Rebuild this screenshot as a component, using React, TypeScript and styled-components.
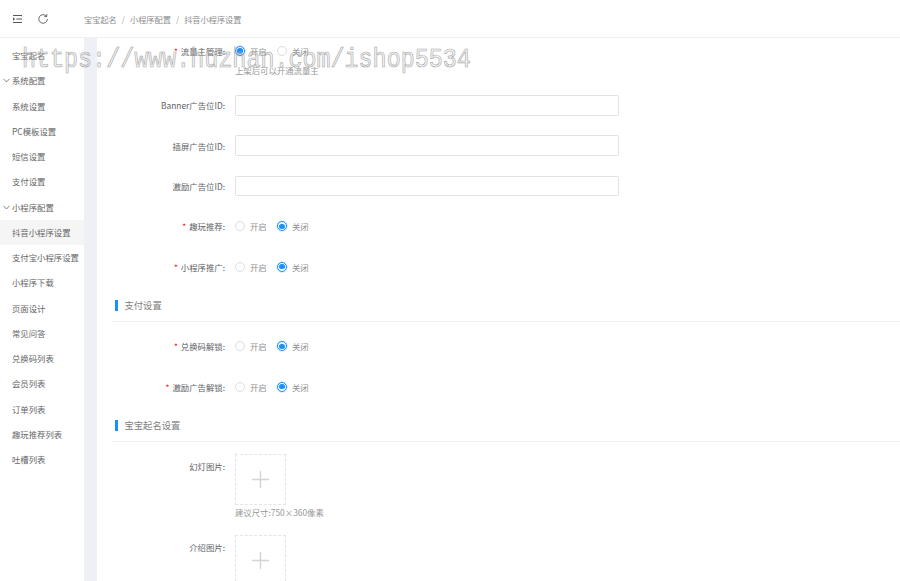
import React from "react";
import styled, { createGlobalStyle } from "styled-components";

const GlobalStyle = createGlobalStyle`
  html, body {
    margin: 0;
    padding: 0;
    height: 100%;
    overflow: hidden;
    background: #fff;
    font-family: "Noto Sans CJK SC", "Noto Sans", sans-serif;
  }
  * { box-sizing: border-box; }
`;

const menu = [
  { name: "宝宝起名", group: false },
  { name: "系统配置", group: true },
  { name: "系统设置", group: false },
  { name: "PC模板设置", group: false },
  { name: "短信设置", group: false },
  { name: "支付设置", group: false },
  { name: "小程序配置", group: true },
  { name: "抖音小程序设置", group: false, active: true },
  { name: "支付宝小程序设置", group: false },
  { name: "小程序下载", group: false },
  { name: "页面设计", group: false },
  { name: "常见问答", group: false },
  { name: "兑换码列表", group: false },
  { name: "会员列表", group: false },
  { name: "订单列表", group: false },
  { name: "趣玩推荐列表", group: false },
  { name: "吐槽列表", group: false },
];

function SwitchRow({ label, on, required = true }: { label: string; on: boolean; required?: boolean }) {
  return (
    <Row>
      <Label $required={required}>{label}</Label>
      <RadioGroup>
        <RadioItem>
          <Radio $checked={on} />
          开启
        </RadioItem>
        <RadioItem>
          <Radio $checked={!on} />
          关闭
        </RadioItem>
      </RadioGroup>
    </Row>
  );
}

function InputRow({ label }: { label: string }) {
  return (
    <Row>
      <Label>{label}</Label>
      <TextInput />
    </Row>
  );
}

function UploadRow({ label, hint }: { label: string; hint?: string }) {
  return (
    <UploadItem>
      <Label>{label}</Label>
      <div>
        <UploadBox>
          <svg width="17" height="17" viewBox="0 0 17 17">
            <path d="M8.5 0v17M0 8.5h17" stroke="#d4d4d4" strokeWidth="1.4" fill="none" />
          </svg>
        </UploadBox>
        {hint && <UploadHint>{hint}</UploadHint>}
      </div>
    </UploadItem>
  );
}

export default function App() {
  return (
    <>
      <GlobalStyle />
      <Page>
        <Header>
          <IconSlot>
            <svg width="9" height="8" viewBox="0 0 9 8">
              <path d="M0 0.5h9M3.4 4h5.6M0 7.5h9" stroke="#555" strokeWidth="1" fill="none" />
              <path d="M0 2.2L2.2 4L0 5.8z" fill="#555" />
            </svg>
          </IconSlot>
          <IconSlot>
            <svg width="10" height="10" viewBox="0 0 10 10">
              <path d="M8.4 2.2A4.3 4.3 0 1 0 9.4 5" stroke="#555" strokeWidth="0.9" fill="none" />
              <path d="M8.8 0.2v2.4H6.4" stroke="#555" strokeWidth="0.9" fill="none" />
            </svg>
          </IconSlot>
          <Breadcrumb>
            <span>宝宝起名</span>
            <Slash>/</Slash>
            <span>小程序配置</span>
            <Slash>/</Slash>
            <span>抖音小程序设置</span>
          </Breadcrumb>
        </Header>
        <Body>
          <Sidebar>
            {menu.map((item) => (
              <MenuItem key={item.name} $active={item.active}>
                {item.group && (
                  <Chevron width="7" height="5" viewBox="0 0 7 5">
                    <path d="M0.5 0.8L3.5 4L6.5 0.8" stroke="#666" strokeWidth="0.8" fill="none" />
                  </Chevron>
                )}
                {item.name}
              </MenuItem>
            ))}
          </Sidebar>
          <Gutter />
          <Main>
            <Row $tight>
              <Label $required>流量主管理:</Label>
              <RadioGroup>
                <RadioItem>
                  <Radio $checked />
                  开启
                </RadioItem>
                <RadioItem>
                  <Radio />
                  关闭
                </RadioItem>
              </RadioGroup>
            </Row>
            <FieldHint>上架后可以开通流量主</FieldHint>
            <InputRow label="Banner广告位ID:" />
            <InputRow label="插屏广告位ID:" />
            <InputRow label="激励广告位ID:" />
            <SwitchRow label="趣玩推荐:" on={false} />
            <SwitchRow label="小程序推广:" on={false} />
            <SectionTitle>支付设置</SectionTitle>
            <SwitchRow label="兑换码解锁:" on={false} />
            <SwitchRow label="激励广告解锁:" on={false} />
            <SectionTitle $compact>宝宝起名设置</SectionTitle>
            <UploadRow label="幻灯图片:" hint="建议尺寸:750×360像素" />
            <UploadRow label="介绍图片:" />
          </Main>
        </Body>
        <Watermark>https://www.huzhan.com/ishop5534</Watermark>
      </Page>
    </>
  );
}

const Page = styled.div`
  position: relative;
  width: 900px;
  height: 581px;
  overflow: hidden;
  display: flex;
  flex-direction: column;
  font-size: 8.4px;
  color: #606266;
`;

const Header = styled.header`
  height: 38px;
  flex: none;
  display: flex;
  align-items: center;
  padding-left: 13px;
  background: #fff;
  border-bottom: 1px solid #f1f1f1;
`;

const IconSlot = styled.div`
  width: 25px;
  display: flex;
  align-items: center;

  svg { display: block; }
`;

const Breadcrumb = styled.div`
  margin-left: 21px;
  display: flex;
  align-items: center;
  color: #8c8c8c;
  font-size: 8.2px;
`;

const Slash = styled.span`
  margin: 0 5px;
  color: #aaa;
`;

const Body = styled.div`
  flex: 1;
  display: flex;
  min-height: 0;
`;

const Sidebar = styled.nav`
  width: 84px;
  flex: none;
  padding-top: 5.2px;
  background: #fff;
`;

const MenuItem = styled.div<{ $active?: boolean }>`
  position: relative;
  height: 25.25px;
  line-height: 25.25px;
  padding-left: 12px;
  white-space: nowrap;
  color: #666;
  background: ${(p) => (p.$active ? "#f5f5f5" : "transparent")};
`;

const Chevron = styled.svg`
  position: absolute;
  left: 3px;
  top: 10px;
`;

const Gutter = styled.div`
  width: 13px;
  flex: none;
  background: #eff0f5;
`;

const Main = styled.main`
  flex: 1;
  padding: 2.6px 0 0 15px;
`;

const Row = styled.div<{ $tight?: boolean }>`
  display: flex;
  align-items: center;
  height: 20.8px;
  margin-bottom: ${(p) => (p.$tight ? "3px" : "19.5px")};
`;

const Label = styled.label<{ $required?: boolean }>`
  width: 113px;
  flex: none;
  margin-right: 10px;
  text-align: right;
  color: #606266;

  ${(p) =>
    p.$required
      ? `&::before {
          content: "*";
          color: #f5222d;
          margin-right: 3px;
        }`
      : ""}
`;

const RadioGroup = styled.div`
  display: flex;
  align-items: center;
`;

const RadioItem = styled.span`
  width: 42px;
  display: flex;
  align-items: center;
  color: #8f8f8f;
`;

const Radio = styled.i<{ $checked?: boolean }>`
  width: 10px;
  height: 10px;
  margin-right: 5px;
  border-radius: 50%;
  background: #fff;
  border: 1px solid ${(p) => (p.$checked ? "#1890ff" : "#dcdcdc")};
  box-shadow: ${(p) => (p.$checked ? "0 0 0 1px rgba(24, 144, 255, 0.15)" : "none")};
  display: flex;
  align-items: center;
  justify-content: center;

  &::after {
    content: "";
    display: ${(p) => (p.$checked ? "block" : "none")};
    width: 5.4px;
    height: 5.4px;
    border-radius: 50%;
    background: #1890ff;
  }
`;

const FieldHint = styled.div`
  margin: 0 0 17.7px 123px;
  height: 13px;
  line-height: 13px;
  color: #999;
`;

const TextInput = styled.input`
  width: 384px;
  height: 20.8px;
  padding: 0 6px;
  background: #fff;
  border: 1px solid #e0e2e6;
  border-radius: 1.5px;
  outline: none;
`;

const SectionTitle = styled.div<{ $compact?: boolean }>`
  height: 25px;
  margin-top: ${(p) => (p.$compact ? "1px" : "0.5px")};
  margin-bottom: ${(p) => (p.$compact ? "12px" : "14.5px")};
  padding: 3px 0 0 12.5px;
  position: relative;
  line-height: 11px;
  font-size: 9.3px;
  color: #808080;
  border-bottom: 1px solid #f2f2f2;
  display: flex;
  align-items: flex-start;

  &::before {
    content: "";
    position: absolute;
    left: 3px;
    top: 3px;
    width: 3px;
    height: 11px;
    background: #1890ff;
  }
`;

const UploadItem = styled.div`
  display: flex;
  align-items: flex-start;
  margin-bottom: 14px;

  ${Label} {
    padding-top: 6px;
  }
`;

const UploadBox = styled.div`
  width: 51px;
  height: 51px;
  display: flex;
  align-items: center;
  justify-content: center;
  border: 1px dashed #e2e4e8;
`;

const UploadHint = styled.div`
  margin-top: 1px;
  margin-bottom: 2px;
  height: 13px;
  line-height: 13px;
  color: #999;
  white-space: nowrap;
`;

const Watermark = styled.div`
  position: absolute;
  left: 22px;
  top: 43px;
  font-family: "Liberation Mono", monospace;
  font-size: 28.5px;
  line-height: 34px;
  white-space: nowrap;
  color: rgba(200, 200, 200, 0.2);
  -webkit-text-stroke: 0.7px #a8a8a8;
  transform: scaleX(0.82);
  transform-origin: left center;
  pointer-events: none;
`;
